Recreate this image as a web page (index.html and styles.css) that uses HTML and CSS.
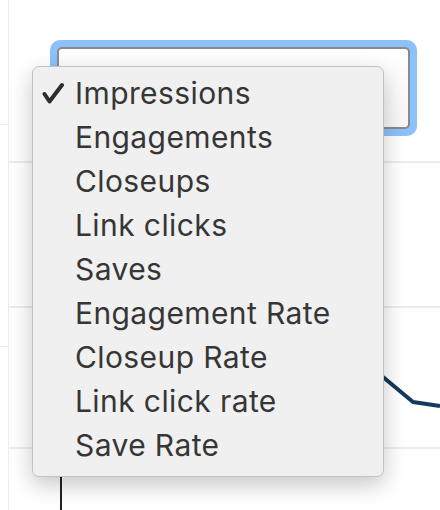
FILE: index.html
```html
<!DOCTYPE html>
<html>
<head>
<meta charset="utf-8">
<link rel="stylesheet" href="styles.css">
</head>
<body>
<div class="app">
  <div class="gutter">
    <div class="gutter-row first"></div>
    <div class="gutter-row second"></div>
  </div>
  <div class="main">
    <div class="select-wrap">
      <div class="select"></div>
    </div>
    <svg class="chart" width="431" height="374" viewBox="0 0 431 374">
      <line x1="0" y1="26" x2="431" y2="26" class="grid"/>
      <line x1="0" y1="171" x2="431" y2="171" class="grid"/>
      <line x1="0" y1="312" x2="431" y2="312" class="grid"/>
      <line x1="52" y1="26" x2="52" y2="374" class="axis"/>
      <polyline points="299,170 374,241 404,266 431,270" class="series"/>
    </svg>
  </div>
</div>
<ul class="menu">
  <li class="item checked"><svg class="check" width="26" height="24" viewBox="0 0 26 24"><path d="M2.5 14 L7.5 21.5 L20 5"/></svg>Impressions</li>
  <li class="item">Engagements</li>
  <li class="item">Closeups</li>
  <li class="item">Link clicks</li>
  <li class="item">Saves</li>
  <li class="item">Engagement Rate</li>
  <li class="item">Closeup Rate</li>
  <li class="item">Link click rate</li>
  <li class="item">Save Rate</li>
</ul>
</body>
</html>
```

FILE: styles.css
```css
html, body {
  margin: 0;
  padding: 0;
  background: #ffffff;
  width: 440px;
  height: 510px;
  overflow: hidden;
  font-family: Inter, "Noto Sans", "Liberation Sans", sans-serif;
}

.app {
  display: grid;
  grid-template-columns: 9px 1fr;
  height: 510px;
}

.gutter {
  border-right: 1px solid #ededed;
  box-sizing: border-box;
  display: flex;
  flex-direction: column;
}

.gutter-row {
  border-bottom: 1px solid #ededed;
}

.gutter-row.first {
  height: 124px;
}

.gutter-row.second {
  height: 221px;
}

.main {
  display: flex;
  flex-direction: column;
}

.select-wrap {
  margin: 40px 0 0 41px;
  width: 367px;
  height: 96px;
  box-sizing: border-box;
  padding: 7px;
  border-radius: 10px;
  background: #8dc1fb;
}

.select {
  height: 100%;
  box-sizing: border-box;
  border: 2px solid #8a8a8a;
  border-radius: 5px;
  background: linear-gradient(#ffffff, #f6f6f6);
}

.chart {
  display: block;
}

.grid {
  stroke: #ececec;
  stroke-width: 2;
}

.axis {
  stroke: #222222;
  stroke-width: 2;
}

.series {
  fill: none;
  stroke: #143a5e;
  stroke-width: 4;
  stroke-linejoin: round;
}

.menu {
  position: absolute;
  left: 32px;
  top: 66px;
  width: 352px;
  height: 411px;
  box-sizing: border-box;
  margin: 0;
  padding: 4px 0 0 0;
  list-style: none;
  background: #f0f0f0;
  border: 1px solid #c2c2c2;
  border-radius: 7px;
  box-shadow: 0 8px 22px rgba(0, 0, 0, 0.22);
}

.item {
  position: relative;
  height: 44px;
  line-height: 44px;
  padding-left: 42px;
  font-size: 30px;
  color: #363636;
  letter-spacing: 0.4px;
}

.check {
  position: absolute;
  left: 9px;
  top: 9px;
}

.check path {
  fill: none;
  stroke: #2d2d2d;
  stroke-width: 4;
  stroke-linecap: round;
  stroke-linejoin: round;
}
```
